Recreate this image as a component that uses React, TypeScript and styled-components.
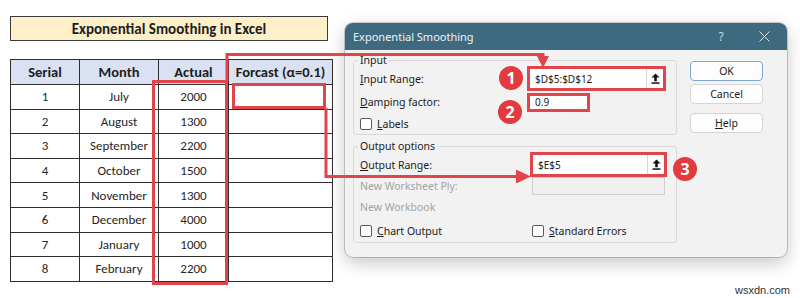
import styled, { createGlobalStyle } from 'styled-components'

const GlobalStyle = createGlobalStyle`
  body {
    margin: 0;
    background: #fff;
  }
`

const RED = '#e0454b'

const Page = styled.div`
  position: relative;
  width: 800px;
  height: 298px;
  display: flex;
  align-items: flex-start;
  overflow: hidden;
  background: #fff;
`

/* ---------- worksheet ---------- */

const Sheet = styled.div`
  width: 318px;
  margin: 16px 0 0 10px;
  display: flex;
  flex-direction: column;
  gap: 18px;
  font-family: Carlito, Lato, "Liberation Sans", sans-serif;
  color: #262626;
`

const Title = styled.div`
  height: 25px;
  box-sizing: border-box;
  border: 1px solid #3a3a3a;
  background: #fdf0c9;
  display: flex;
  align-items: center;
  justify-content: center;
  font-weight: 700;
  font-size: 15px;
  color: #1e1e1e;
`

const Table = styled.table`
  border-collapse: collapse;
  table-layout: fixed;
  width: 318px;
`

const Th = styled.th<{ $w: number }>`
  width: ${p => p.$w}px;
  height: 24px;
  padding: 0;
  border: 1px solid #2e2e2e;
  background: #d9e1f2;
  font-size: 14.5px;
  font-weight: 700;
  color: #1e1e1e;
  text-align: center;
  white-space: nowrap;
`

const Td = styled.td`
  height: 23.6px;
  padding: 0;
  border: 1px solid #2e2e2e;
  font-size: 13px;
  text-align: center;
`

/* ---------- dialog ---------- */

const Dialog = styled.div`
  margin: 23px 0 0 17px;
  width: 442px;
  height: 234px;
  border-radius: 8px;
  background: #f2f2f2;
  box-shadow: 0 0 0 1px rgba(0, 0, 0, 0.18), 0 6px 18px rgba(0, 0, 0, 0.22);
  overflow: hidden;
  display: flex;
  flex-direction: column;
  font-family: "Segoe UI", "Noto Sans", sans-serif;
  font-size: 10.5px;
  color: #1b1b1b;
`

const TitleBar = styled.div`
  height: 27px;
  flex: none;
  background: #3e6a80;
  color: #eef3f5;
  display: flex;
  align-items: center;
  padding-left: 8px;
  font-size: 11px;
`

const TitleText = styled.span`
  flex: 1;
`

const TitleButton = styled.span<{ $w: number }>`
  width: ${p => p.$w}px;
  display: flex;
  justify-content: center;
  color: #c9d8df;
  font-size: 12px;
`

const Body = styled.div`
  display: grid;
  grid-template-columns: 324px 73px;
  column-gap: 13px;
  padding: 4px 0 0 8px;
`

const Groups = styled.div`
  display: flex;
  flex-direction: column;
  gap: 5px;
`

const Group = styled.fieldset`
  margin: 0;
  padding: 0 10px 0 6px;
  border: 1px solid #d9d9d9;
  border-radius: 3px;
  min-width: 0;
`

const Legend = styled.legend`
  padding: 0 2px;
  margin-left: -2px;
  line-height: 12px;
`

const Row = styled.div<{ $h: number }>`
  height: ${p => p.$h}px;
  display: grid;
  grid-template-columns: 167px 1fr;
  align-items: center;
`

const Label = styled.span<{ $disabled?: boolean }>`
  color: ${p => (p.$disabled ? '#a2a2a2' : 'inherit')};
  white-space: nowrap;
`

const Field = styled.div<{ $w: number; $h: number; $marked?: boolean; $disabled?: boolean; $shift?: number }>`
  width: ${p => p.$w}px;
  height: ${p => p.$h}px;
  margin-left: ${p => p.$shift ?? 0}px;
  box-sizing: border-box;
  border: ${p => (p.$marked ? `3px solid ${RED}` : '1px solid #cfcfcf')};
  background: ${p => (p.$disabled ? '#f0f0f0' : '#fff')};
  display: flex;
  align-items: center;
  padding-left: 5px;
  font-size: 10px;
`

const FieldText = styled.span`
  flex: 1;
`

const PickButton = styled.span`
  width: 16px;
  align-self: stretch;
  border-left: 1px solid #d6d6d6;
  display: flex;
  align-items: center;
  justify-content: center;
`

const Check = styled.label<{ $shift?: number }>`
  display: flex;
  align-items: center;
  gap: 5px;
  margin-left: ${p => p.$shift ?? 0}px;
  white-space: nowrap;
`

const Box = styled.span`
  width: 12px;
  height: 12px;
  box-sizing: border-box;
  border: 1px solid #5a5a5a;
  border-radius: 2px;
  background: #fff;
`

const Buttons = styled.div`
  display: flex;
  flex-direction: column;
  padding-top: 7px;
`

const Button = styled.button<{ $primary?: boolean; $gap: number }>`
  height: 20px;
  margin-bottom: ${p => p.$gap}px;
  border: 1px solid ${p => (p.$primary ? '#7ea6d3' : '#d4d4d4')};
  border-radius: 4px;
  background: #fdfdfd;
  font: inherit;
  color: #1b1b1b;
  padding: 0;
`

/* ---------- annotations ---------- */

const Overlay = styled.svg`
  position: absolute;
  left: 0;
  top: 0;
  pointer-events: none;
`

const Badge = styled.div<{ $x: number; $y: number }>`
  position: absolute;
  left: ${p => p.$x - 12}px;
  top: ${p => p.$y - 12}px;
  width: 24px;
  height: 24px;
  border-radius: 50%;
  background: #e23a3e;
  color: #fff;
  display: flex;
  align-items: center;
  justify-content: center;
  font-family: "Open Sans", "Liberation Sans", sans-serif;
  font-weight: 700;
  font-size: 16px;
`

const Watermark = styled.div`
  position: absolute;
  right: 10px;
  bottom: 2px;
  font-family: "Liberation Sans", sans-serif;
  font-size: 11px;
  color: #333;
`

const rows: [number, string, number][] = [
  [1, 'July', 2000],
  [2, 'August', 1300],
  [3, 'September', 2200],
  [4, 'October', 1500],
  [5, 'November', 1300],
  [6, 'December', 4000],
  [7, 'January', 1000],
  [8, 'February', 2200],
]

const UpArrow = () => (
  <svg width="9" height="11" viewBox="0 0 9 11">
    <path d="M4.5 0.5 L8.5 4.6 H5.8 V8.2 H3.2 V4.6 H0.5 Z" fill="#111" />
    <rect x="0.5" y="9.3" width="8" height="1.5" fill="#111" />
  </svg>
)

const App = () => {
  return (
    <Page>
      <GlobalStyle />
      <Sheet>
        <Title>Exponential Smoothing in Excel</Title>
        <Table>
          <thead>
            <tr>
              <Th $w={68}>Serial</Th>
              <Th $w={78}>Month</Th>
              <Th $w={69}>Actual</Th>
              <Th $w={103}>Forcast (α=0.1)</Th>
            </tr>
          </thead>
          <tbody>
            {rows.map(([n, month, actual]) => (
              <tr key={n}>
                <Td>{n}</Td>
                <Td>{month}</Td>
                <Td>{actual}</Td>
                <Td />
              </tr>
            ))}
          </tbody>
        </Table>
      </Sheet>

      <Dialog>
        <TitleBar>
          <TitleText>Exponential Smoothing</TitleText>
          <TitleButton $w={40}>?</TitleButton>
          <TitleButton $w={46}>
            <svg width="11" height="11" viewBox="0 0 11 11">
              <path d="M0.5 0.5 L10.5 10.5 M10.5 0.5 L0.5 10.5" stroke="#dbe5ea" strokeWidth="1" />
            </svg>
          </TitleButton>
        </TitleBar>
        <Body>
          <Groups>
            <Group>
              <Legend>Input</Legend>
              <Row $h={25}>
                <Label><u>I</u>nput Range:</Label>
                <Field $w={139} $h={25} $marked>
                  <FieldText>$D$5:$D$12</FieldText>
                  <PickButton><UpArrow /></PickButton>
                </Field>
              </Row>
              <Row $h={22}>
                <Label><u>D</u>amping factor:</Label>
                <Field $w={63} $h={19} $marked>0.9</Field>
              </Row>
              <Row $h={21}>
                <Check><Box /><span><u>L</u>abels</span></Check>
              </Row>
            </Group>
            <Group>
              <Legend>Output options</Legend>
              <Row $h={24}>
                <Label><u>O</u>utput Range:</Label>
                <Field $w={137} $h={25} $marked $shift={3}>
                  <FieldText>$E$5</FieldText>
                  <PickButton><UpArrow /></PickButton>
                </Field>
              </Row>
              <Row $h={19}>
                <Label $disabled>New Worksheet Ply:</Label>
                <Field $w={133} $h={18} $disabled $shift={5} />
              </Row>
              <Row $h={24}>
                <Label $disabled>New Workbook</Label>
              </Row>
              <Row $h={23}>
                <Check><Box /><span><u>C</u>hart Output</span></Check>
                <Check $shift={5}><Box /><span><u>S</u>tandard Errors</span></Check>
              </Row>
            </Group>
          </Groups>
          <Buttons>
            <Button $primary $gap={3}>OK</Button>
            <Button $gap={9}>Cancel</Button>
            <Button $gap={0}><u>H</u>elp</Button>
          </Buttons>
        </Body>
      </Dialog>

      <Overlay width="800" height="298" viewBox="0 0 800 298">
        <g fill="none" stroke={RED} strokeWidth="3">
          <rect x="153.5" y="81.5" width="73" height="202" />
          <rect x="233.5" y="84.5" width="91" height="23" />
          <polyline points="227,81 227,54.5 543,54.5 543,58" />
          <polyline points="326,108 326,176.5 518,176.5" />
        </g>
        <g fill={RED}>
          <polygon points="537,56 549,56 543,68" />
          <polygon points="516,169.5 531,176.5 516,183.5" />
        </g>
      </Overlay>
      <Badge $x={511} $y={78}>1</Badge>
      <Badge $x={510} $y={112}>2</Badge>
      <Badge $x={685} $y={169}>3</Badge>
      <Watermark>wsxdn.com</Watermark>
    </Page>
  )
}

export default App
